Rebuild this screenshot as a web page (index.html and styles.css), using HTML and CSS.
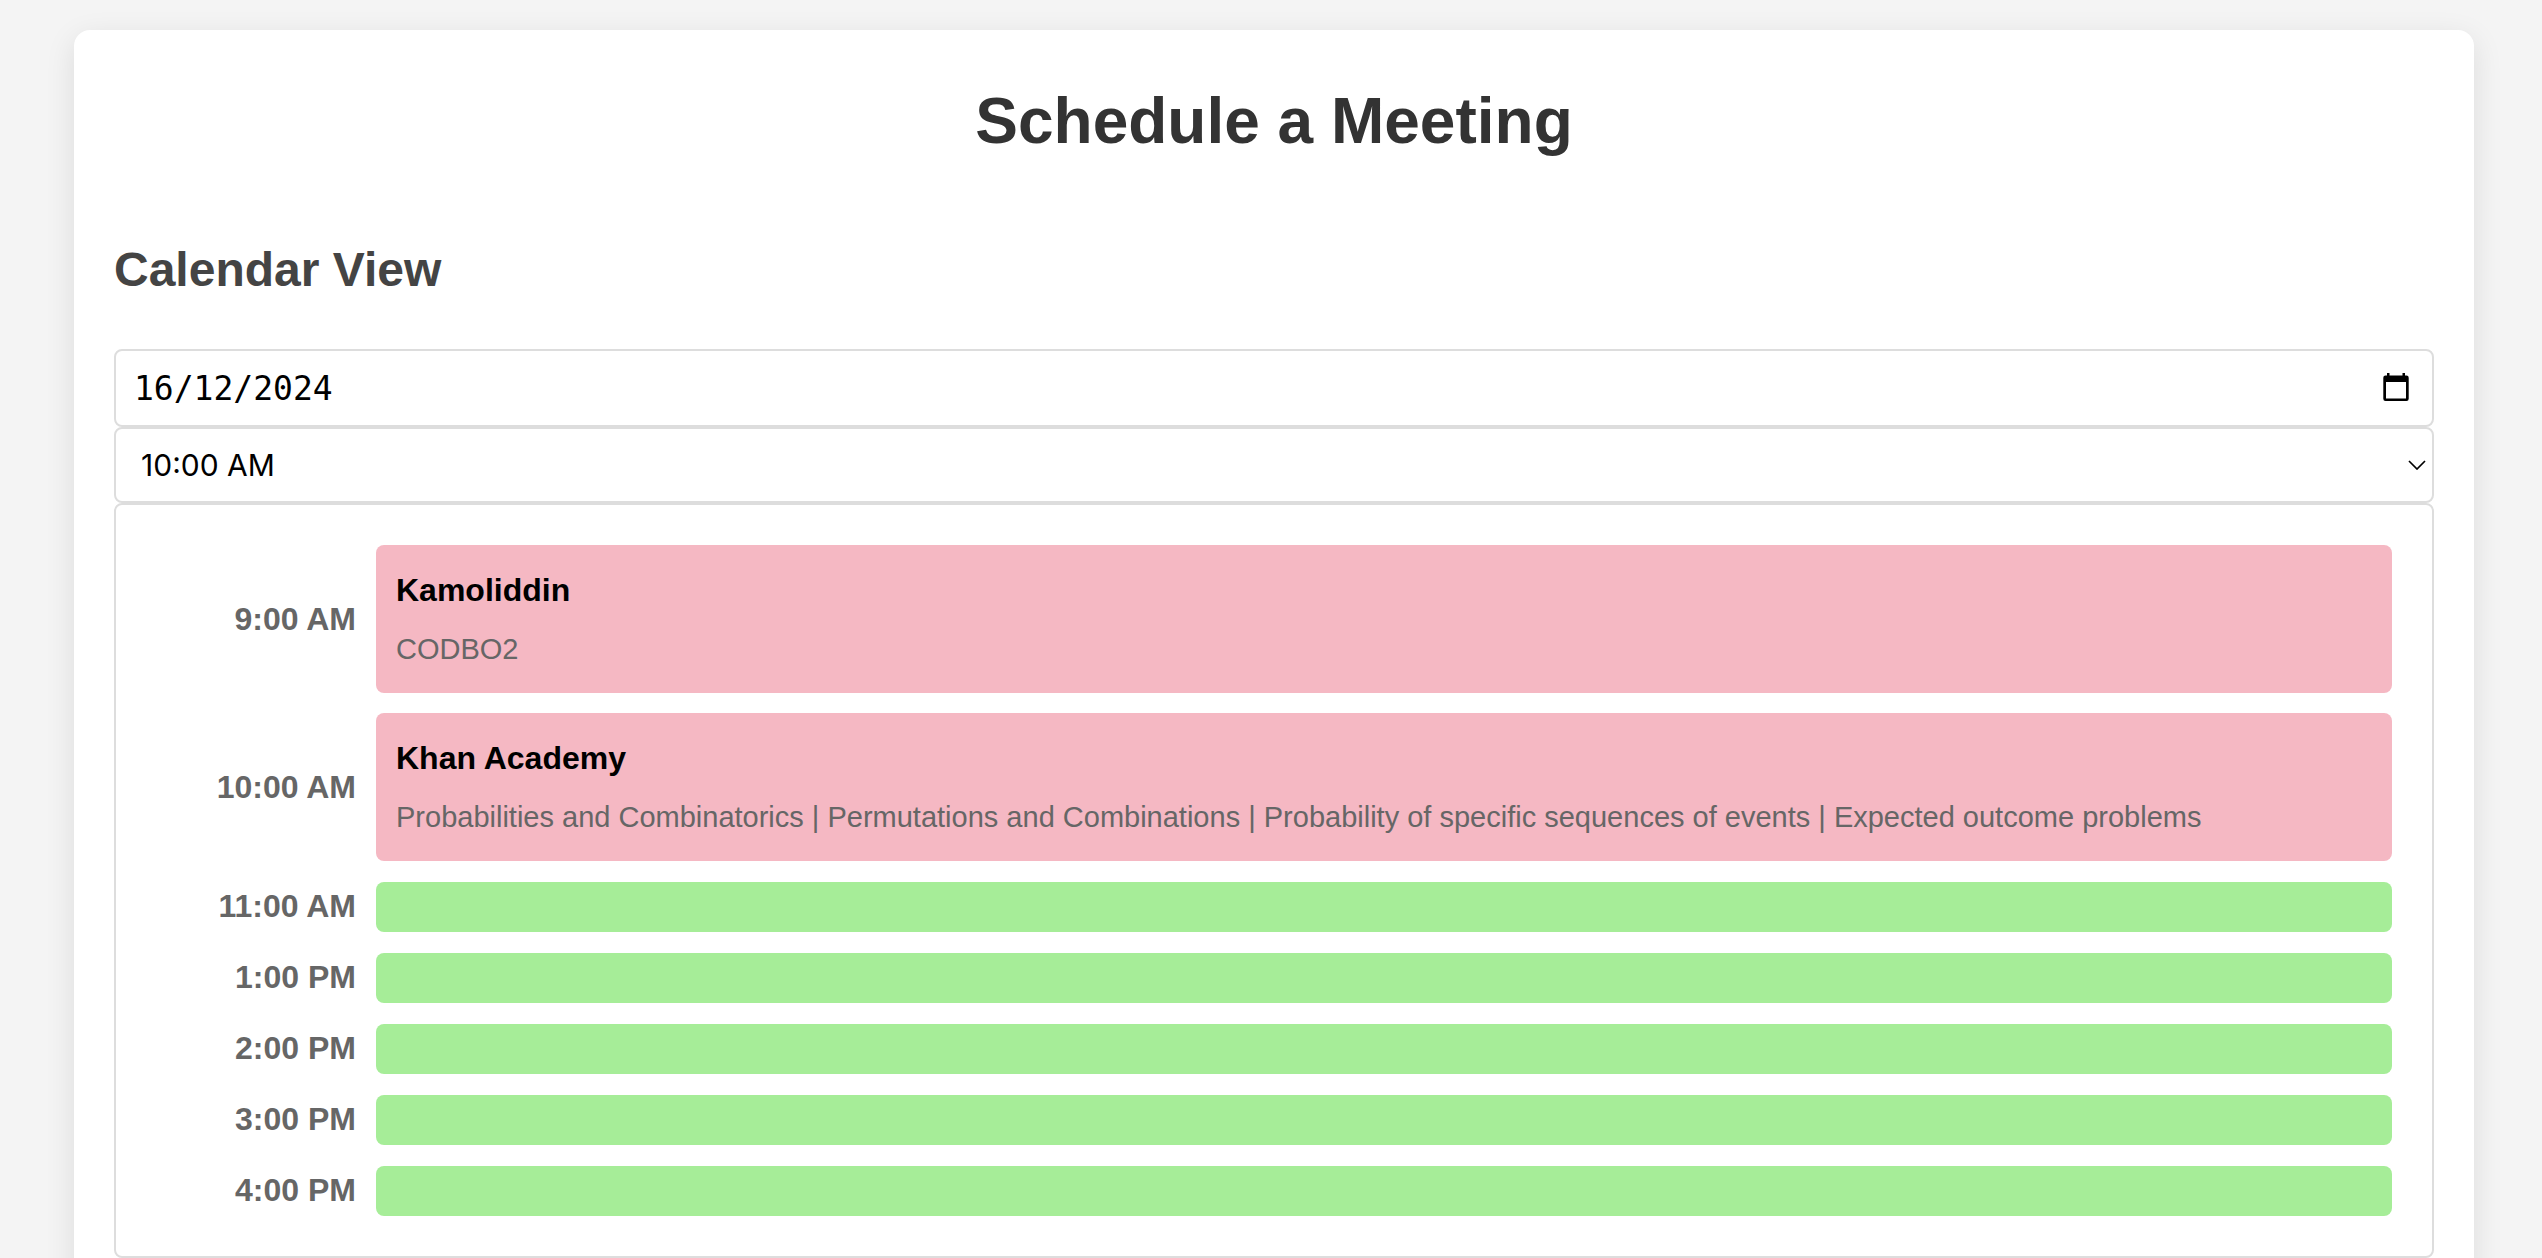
FILE: index.html
```html
<!DOCTYPE html>
<html lang="en">
<head>
<meta charset="utf-8">
<meta name="viewport" content="width=device-width, initial-scale=1">
<title>Schedule a Meeting</title>
<link rel="stylesheet" href="styles.css">
</head>
<body>
<main class="card">
  <h1 class="title">Schedule a Meeting</h1>
  <section>
    <h2 class="subtitle">Calendar View</h2>
    <div class="field">
      <input class="control control-date" type="text" value="16/12/2024" aria-label="Date">
      <button class="picker" type="button" aria-label="Open calendar">
        <svg width="26" height="28" viewBox="0 0 26 28"><path fill-rule="evenodd" d="M4 0h2.500v2.500h13V0H22v2.500h1.500a2.200 2.200 0 0 1 2.200 2.200v21a2.200 2.200 0 0 1-2.200 2.200h-21a2.200 2.200 0 0 1-2.200-2.200v-21a2.200 2.200 0 0 1 2.200-2.200H4zM3 9v16.500h20V9z"/></svg>
      </button>
    </div>
    <div class="field">
      <select class="control control-time" aria-label="Time">
        <option>9:00 AM</option>
        <option selected>10:00 AM</option>
        <option>11:00 AM</option>
        <option>1:00 PM</option>
        <option>2:00 PM</option>
        <option>3:00 PM</option>
        <option>4:00 PM</option>
      </select>
      <svg class="chevron" width="18" height="10" viewBox="0 0 18 10"><path d="M1 1l8 8 8-8" fill="none" stroke="#000" stroke-width="1.700"/></svg>
    </div>
    <div class="slots">
      <div class="row"><div class="time">9:00 AM</div><div class="slot booked"><strong class="name">Kamoliddin</strong><p class="topic">CODBO2</p></div></div>
      <div class="row"><div class="time">10:00 AM</div><div class="slot booked"><strong class="name">Khan Academy</strong><p class="topic">Probabilities and Combinatorics | Permutations and Combinations | Probability of specific sequences of events | Expected outcome problems</p></div></div>
      <div class="row"><div class="time">11:00 AM</div><div class="slot free"></div></div>
      <div class="row"><div class="time">1:00 PM</div><div class="slot free"></div></div>
      <div class="row"><div class="time">2:00 PM</div><div class="slot free"></div></div>
      <div class="row"><div class="time">3:00 PM</div><div class="slot free"></div></div>
      <div class="row"><div class="time">4:00 PM</div><div class="slot free"></div></div>
    </div>
  </section>
</main>
</body>
</html>
```
FILE: styles.css
```css
* {
  box-sizing: border-box;
}

html {
  scrollbar-width: none;
}

body {
  margin: 0;
  padding: 30px 68px 40px 74px;
  background: #f4f4f4;
  font-family: "Liberation Sans", Arial, sans-serif;
  font-size: 32px;
  line-height: 51px;
}

.card {
  padding: 40px;
  background: #fff;
  border-radius: 16px;
  box-shadow: 0 8px 30px rgba(0, 0, 0, 0.1);
}

.title {
  margin: 0 0 60px;
  color: #333;
  font-size: 64px;
  line-height: 102px;
  text-align: center;
}

.subtitle {
  margin: 0 0 42px;
  color: #444;
  font-size: 48px;
  line-height: 75px;
}

.field {
  position: relative;
  display: flex;
}

.control {
  width: 100%;
  margin: 0;
  border: 2px solid #ddd;
  border-radius: 8px;
  background: #fff;
  color: #000;
  appearance: none;
}

.control-date {
  height: 78px;
  padding: 0 18px;
  font: 33px "DejaVu Sans Mono", monospace;
}

.control-time {
  height: 76px;
  padding: 0 25px;
  font: 30px Inter, sans-serif;
}

.picker {
  position: absolute;
  top: 24px;
  right: 25px;
  display: flex;
  padding: 0;
  border: 0;
  background: none;
}

.chevron {
  position: absolute;
  top: 33px;
  right: 8px;
  pointer-events: none;
}

.slots {
  display: flex;
  flex-direction: column;
  gap: 20px;
  padding: 40px;
  border: 2px solid #ddd;
  border-radius: 8px;
}

.row {
  display: flex;
  align-items: center;
  gap: 20px;
}

.time {
  width: 200px;
  color: #666;
  font-weight: bold;
  text-align: right;
}

.slot {
  flex: 1;
  border-radius: 8px;
}

.booked {
  padding: 20px;
  background: #f5b8c3;
}

.free {
  height: 50px;
  background: #a6ed98;
}

.name {
  display: block;
}

.topic {
  margin: 10px 0 0;
  color: #666;
  font-size: 29px;
  line-height: 47px;
}
```
